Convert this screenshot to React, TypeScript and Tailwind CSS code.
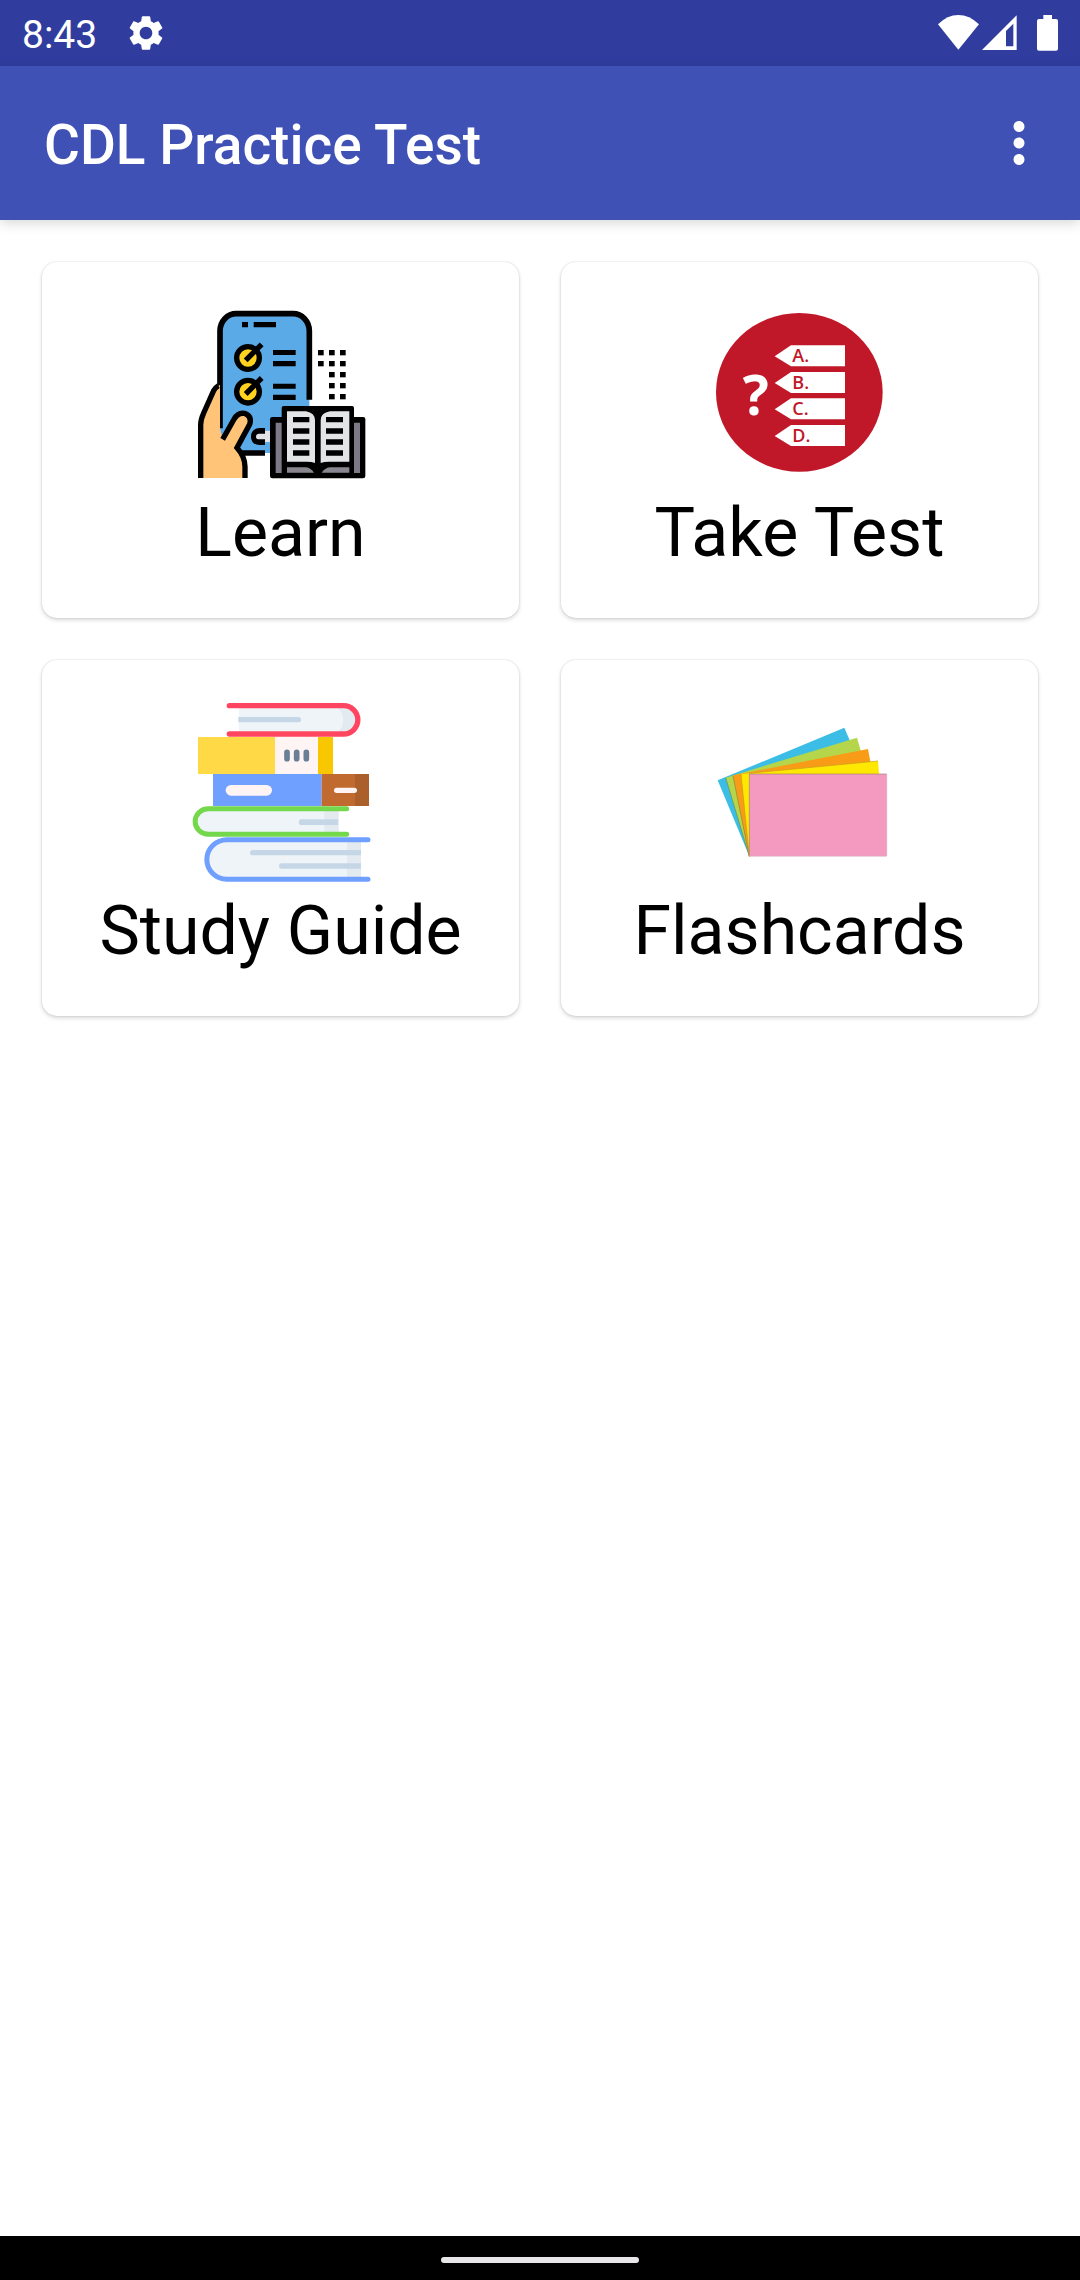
import type { ReactNode } from "react";
import { MdMoreVert, MdSettings } from "react-icons/md";

function LearnIcon() {
  const lines = [366, 400, 433, 466];
  const dots = [
    [411, 165], [444, 165], [477, 165],
    [411, 198], [444, 198], [477, 198],
    [444, 231], [477, 231],
    [444, 264], [477, 264],
    [444, 297], [477, 297],
  ];
  return (
    <svg viewBox="0 -9 600 600" className="size-[200px]" aria-hidden="true">
      {/* phone */}
      <path d="M117 474V110Q119 62 165 56H340Q382 62 385 110V474Z" fill="#5aaae7" />
      <path d="M117 400V108A49 52 0 0 1 166 56H336A49 52 0 0 1 385 108V314M172 474H252" fill="none" stroke="#000" strokeWidth="17" />
      <path d="M183 81h18v16h-18zM218 81h67v16h-67z" />
      {[189, 290].map((y) => (
        <g key={y}>
          <circle cx="201" cy={y} r="34" fill="#ffd21f" stroke="#000" strokeWidth="16" />
          <path d={`M194 ${y + 7}L242 ${y - 41}`} stroke="#000" strokeWidth="16" />
          <path d={`M276 ${y - 24}h68v15h-68zM276 ${y + 9}h68v16h-68z`} />
        </g>
      ))}
      {dots.map(([x, y]) => (
        <rect key={`${x}-${y}`} x={x} y={y} width="17" height="16" />
      ))}
      {/* home button */}
      <path d="M252 399V450H236Q210 448 210 425Q210 401 236 399Z" />
      <path d="M268 407V441H252V433H235Q225 433 225 425Q225 416 235 416H252V407Z" fill="#e1e3e7" />
      {/* hand */}
      <path d="M59 549V385Q59 372 68 352L98 285Q104 274 117 270V400L125 433L160 372Q171 353 190 356Q212 364 207 388L168 458Q192 488 192 515V549Z" fill="#ffc477" />
      <path d="M59 549V390Q59 374 68 354L98 287Q102 278 112 272M125 433L159 373Q170 352 190 355Q214 364 206 388L168 458Q192 485 192 515V549" fill="none" stroke="#000" strokeWidth="16" />
      {/* book */}
      <rect x="267" y="366" width="286" height="184" rx="7" />
      <path d="M284 383h19v151h-19zM519 383h18v151h-18z" fill="#7d7985" />
      <rect x="302" y="333" width="217" height="214" rx="6" />
      <path d="M318 349H375Q402 354 402 376V504Q392 500 378 500H318ZM505 349H447Q419 354 419 376V504Q429 500 444 500H505Z" fill="#e3e4e6" />
      <path d="M318 517H375Q390 519 399 533H318ZM505 517H447Q431 519 422 533H505Z" fill="#898690" />
      {lines.map((y) => (
        <path key={y} d={`M336 ${y}h49v16h-49zM435 ${y}h51v16h-51z`} />
      ))}
    </svg>
  );
}

function TestIcon() {
  const options = [
    { label: "A.", y: 151 },
    { label: "B.", y: 231 },
    { label: "C.", y: 310 },
    { label: "D.", y: 390 },
  ];
  return (
    <svg viewBox="0 -9 600 600" className="size-[200px]" aria-hidden="true">
      <ellipse cx="298" cy="292" rx="250" ry="238" fill="#c01828" />
      <text x="128" y="360" fill="#fff" className="font-['Open_Sans',sans-serif] text-[164px] font-bold">?</text>
      {options.map(({ label, y }) => (
        <g key={label}>
          <path d={`M224 ${y + 33}L273 ${y}H435V${y + 63}H273Z`} fill="#fff" />
          <text x="277" y={y + 51} fill="#c01828" className="font-['Open_Sans',sans-serif] text-[54px] font-semibold">
            {label}
          </text>
        </g>
      ))}
    </svg>
  );
}

function BooksIcon() {
  return (
    <svg viewBox="0 0 600 600" className="size-[200px]" aria-hidden="true">
      {/* red */}
      <path d="M174 47H490A42 42 0 0 1 490 131H174Z" fill="#eff4f8" />
      <path d="M460 47H490A42 42 0 0 1 490 131H460Q487 120 487 89Q487 64 460 47Z" fill="#e3eaf0" />
      <path d="M172 81H352a8 8 0 0 1 0 16H172z" fill="#c5d6e6" />
      <path d="M145 47H488A42 42 0 0 1 488 132H145" fill="none" stroke="#ff4560" strokeWidth="16" strokeLinecap="round" />
      {/* yellow */}
      <path d="M51 141h231v111H51z" fill="#ffd946" />
      <path d="M282 141h130v111H282z" fill="#fff4f4" />
      <path d="M411 141h45v111h-45z" fill="#f9c700" />
      <path d="M318 187v19M347 187v19M376 187v19" stroke="#687f95" strokeWidth="17" strokeLinecap="round" />
      {/* blue and brown */}
      <path d="M96 252h326v96H96z" fill="#6f9fff" />
      <path d="M422 252h101v96H422z" fill="#c06a30" />
      <path d="M522 252h42v96h-42z" fill="#ab5f2b" />
      <rect x="134" y="285" width="139" height="32" rx="16" fill="#fff4f4" />
      <rect x="459" y="293" width="69" height="16" rx="8" fill="#fff4f4" />
      {/* green */}
      <path d="M473 356H82A39 38 0 0 0 82 433H473Z" fill="#eff4f8" />
      <path d="M430 356h43v77h-43z" fill="#e3eaf0" />
      <path d="M471 388H362a8 8 0 0 0 0 17H471z" fill="#c5d6e6" />
      <path d="M497 356H82A39 38 0 0 0 82 433H497" fill="none" stroke="#73d84b" strokeWidth="15" strokeLinecap="round" />
      {/* blue open */}
      <path d="M540 449H138A60 59 0 0 0 138 568H540Z" fill="#eff4f8" />
      <path d="M498 449h42v119h-42z" fill="#e3eaf0" />
      <path d="M540 480H215a8 8 0 0 0 0 16H540zM540 520H302a8 8 0 0 0 0 16H540z" fill="#c5d6e6" />
      <path d="M561 449H138A60 59 0 0 0 138 568H561" fill="none" stroke="#6f9fff" strokeWidth="15" strokeLinecap="round" />
    </svg>
  );
}

function CardsIcon() {
  return (
    <svg viewBox="0 -60 600 600" className="size-[200px]" aria-hidden="true">
      <path d="M53 211L433 53L530 280L148 439Z" fill="#3bbde5" />
      <path d="M77 203L471 83L540 320L148 439Z" fill="#b5d64a" />
      <path d="M77 203L148 439" stroke="#5f8f55" strokeWidth="2" />
      <path d="M99 196L504 117L550 360L148 439Z" fill="#f89c18" />
      <path d="M99 198L148 439" stroke="#9b7a2c" strokeWidth="2" />
      <path d="M123 192L534 153L555 415L148 439Z" fill="#ffe800" />
      <path d="M123 192L148 439M148 190L534 153" stroke="#c99b1c" strokeWidth="2" />
      <path d="M148 192H560V439H148Z" fill="#f49ac1" />
      <path d="M148 439V192H560" fill="none" stroke="#a5806a" strokeWidth="2" />
      <path d="M148 438H560V192" fill="none" stroke="#d9a5bd" strokeWidth="2" />
    </svg>
  );
}

function StatusBar() {
  return (
    <div className="flex h-[66px] items-center justify-between bg-[#303d9f] px-[22px] text-white">
      <div className="flex items-center gap-7">
        <span className="pt-1 text-[39px] leading-[46px]">8:43</span>
        <MdSettings size={42} aria-hidden="true" />
      </div>
      <div className="flex items-center" aria-hidden="true">
        <svg viewBox="0 0 123 108" className="h-9 w-[41px]" fill="currentColor">
          <path d="M0 28Q28 0 61 0T123 28L61 104Z" />
        </svg>
        <svg viewBox="0 0 105 108" className="ml-[3px] h-9 w-[35px]" fill="currentColor">
          <path fillRule="evenodd" d="M104 1V105H0ZM94 26L72 48V94H94Z" />
        </svg>
        <svg viewBox="0 0 63 108" className="ml-5 h-9 w-[21px]" fill="currentColor">
          <path d="M19 0H45V12H57Q63 12 63 18V101Q63 107 57 107H6Q0 107 0 101V18Q0 12 6 12H19Z" />
        </svg>
      </div>
    </div>
  );
}

function MenuCard({ title, icon }: { title: string; icon: ReactNode }) {
  return (
    <button
      type="button"
      className="flex flex-col items-center rounded-[15px] bg-white pt-[30px] pb-11 shadow-[0_2px_4px_rgba(0,0,0,0.16),0_0_2px_rgba(0,0,0,0.14)]"
    >
      {icon}
      <span className="text-[68px] leading-[82px]">{title}</span>
    </button>
  );
}

const items = [
  { title: "Learn", icon: <LearnIcon /> },
  { title: "Take Test", icon: <TestIcon /> },
  { title: "Study Guide", icon: <BooksIcon /> },
  { title: "Flashcards", icon: <CardsIcon /> },
];

export default function App() {
  return (
    <div className="flex min-h-screen flex-col bg-white font-[Roboto,sans-serif] text-black">
      <StatusBar />
      <header className="flex h-[154px] items-center justify-between bg-[#3f51b5] pr-7 pl-11 text-white shadow-[0_3px_12px_rgba(0,0,0,0.16)]">
        <h1 className="pt-1 text-[55px] leading-[64px] font-medium">CDL Practice Test</h1>
        <button type="button" aria-label="More options">
          <MdMoreVert size={66} />
        </button>
      </header>
      <main className="flex-1 p-[42px]">
        <div className="grid grid-cols-2 gap-[42px]">
          {items.map((item) => (
            <MenuCard key={item.title} title={item.title} icon={item.icon} />
          ))}
        </div>
      </main>
      <div className="flex h-11 items-center justify-center bg-black pt-1">
        <div className="h-[6px] w-[198px] rounded-full bg-[#e8e6e8]" />
      </div>
    </div>
  );
}
